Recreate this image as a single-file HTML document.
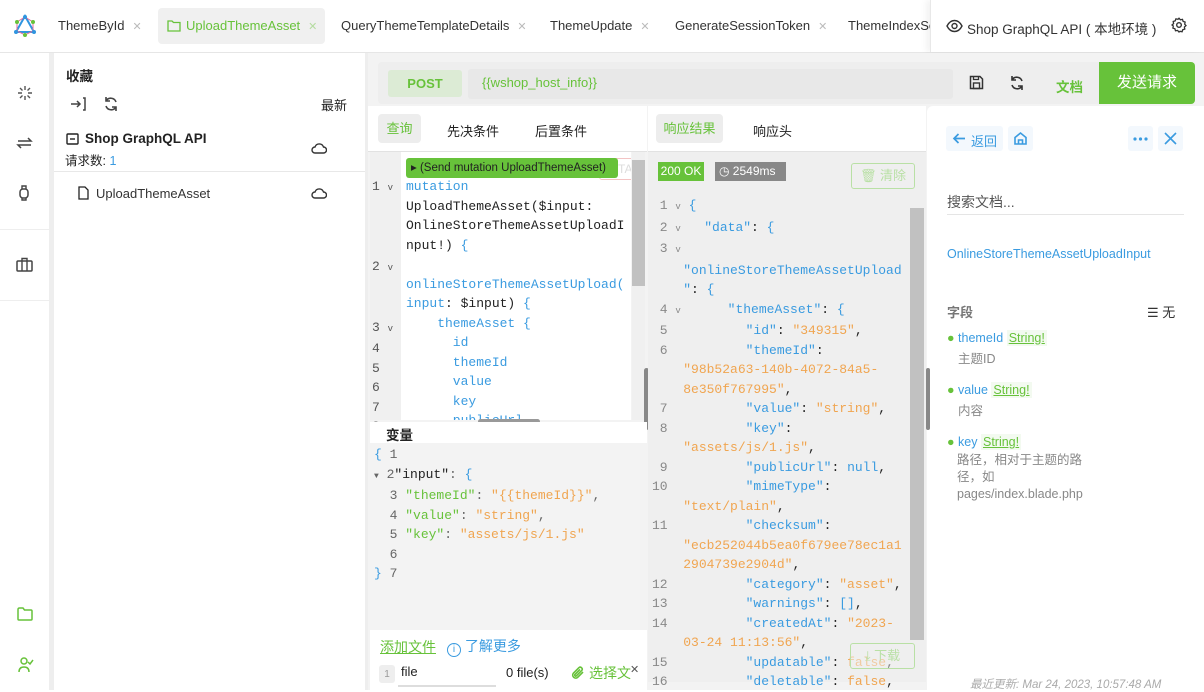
<!DOCTYPE html>
<html><head><meta charset="utf-8"><style>
*{box-sizing:border-box;margin:0;padding:0}
body{width:1204px;height:690px;overflow:hidden;background:#fff;font-family:"Liberation Sans","Noto Sans CJK SC",sans-serif;font-size:13px;color:#222;position:relative}
.a{position:absolute}
.mono{font-family:"Liberation Mono","Noto Sans CJK SC",monospace;font-size:13px;white-space:pre;line-height:19.5px}
.tab{position:absolute;top:8px;height:36px;line-height:36px;font-size:13px;color:#333}
.x{color:#bbb;font-size:11px;margin-left:8px}
.b{color:#3a9be0}.o{color:#f0a550}.g{color:#67c23a}.n{color:#888}
</style></head><body>
<!-- top bar -->
<div class="a" style="left:0;top:52px;width:1204px;height:1px;background:#e6e6e6"></div>
<svg class="a" style="left:13px;top:14px" width="24" height="24" viewBox="0 0 24 24"><polygon points="12,2 21,18 3,18" fill="none" stroke="#2f95e0" stroke-width="2"/><polygon points="12,3 20,8 20,17 12,21 4,17 4,8" fill="none" stroke="#e46d9b" stroke-width="1"/><circle cx="12" cy="3" r="2" fill="#2f95e0"/><circle cx="4" cy="8" r="2" fill="#67c23a"/><circle cx="20" cy="8" r="2" fill="#67c23a"/><circle cx="12" cy="21" r="2" fill="#67c23a"/><circle cx="3" cy="18" r="2" fill="#2f95e0"/><circle cx="21" cy="18" r="2" fill="#2f95e0"/></svg>
<div class="tab" style="left:58px">ThemeById<span class="x">✕</span></div>
<div class="a" style="left:158px;top:8px;width:167px;height:36px;background:#f0f0f0;border-radius:4px"></div>
<svg class="a" style="left:167px;top:19px" width="14" height="13" viewBox="0 0 14 13"><path d="M1 2h4l1.5 1.5H13V12H1z" fill="none" stroke="#67c23a" stroke-width="1.3"/></svg>
<div class="tab" style="left:186px;color:#67c23a">UploadThemeAsset<span class="x" style="color:#b5dca0">✕</span></div>
<div class="tab" style="left:341px">QueryThemeTemplateDetails<span class="x">✕</span></div>
<div class="tab" style="left:550px">ThemeUpdate<span class="x">✕</span></div>
<div class="tab" style="left:675px">GenerateSessionToken<span class="x">✕</span></div>
<div class="tab" style="left:848px">ThemeIndexSe</div>
<div class="a" style="left:930px;top:0;width:274px;height:52px;background:#fff;border-left:1px solid #e8e8e8;box-shadow:-4px 0 6px rgba(0,0,0,.05)"></div>
<svg class="a" style="left:946px;top:19px" width="17" height="14" viewBox="0 0 17 14"><path d="M1 7C3 3 6 1.5 8.5 1.5S14 3 16 7C14 11 11 12.5 8.5 12.5S3 11 1 7z" fill="none" stroke="#333" stroke-width="1.4"/><circle cx="8.5" cy="7" r="2.5" fill="none" stroke="#333" stroke-width="1.4"/></svg>
<div class="a" style="left:967px;top:18px;font-size:13.5px;color:#333">Shop GraphQL API ( 本地环境 )</div>
<svg class="a" style="left:1171px;top:17px" width="16" height="16" viewBox="0 0 16 16"><circle cx="8" cy="8" r="2.3" fill="none" stroke="#333" stroke-width="1.4"/><path d="M8 1.2l1.4 1.6 2.1-.4.6 2 2 .7-.4 2.1L15 8.6l-1.6 1.4.4 2.1-2 .6-.7 2-2.1-.4L8 15l-1.4-1.6-2.1.4-.6-2-2-.7.4-2.1L1 8l1.6-1.4-.4-2.1 2-.6.7-2 2.1.4z" fill="none" stroke="#333" stroke-width="1.3"/></svg>

<!-- left rail -->
<div class="a" style="left:49px;top:53px;width:5px;height:637px;background:#eee"></div>
<div class="a" style="left:0;top:229px;width:49px;height:1px;background:#eee"></div>
<div class="a" style="left:0;top:300px;width:49px;height:1px;background:#eee"></div>
<svg class="a" style="left:17px;top:85px" width="16" height="16" viewBox="0 0 16 16" stroke="#555" stroke-width="1.4"><path d="M8 1v4M8 11v4M1 8h4M11 8h4M3 3l2.5 2.5M10.5 10.5L13 13M13 3l-2.5 2.5M5.5 10.5L3 13"/></svg>
<svg class="a" style="left:16px;top:135px" width="17" height="16" viewBox="0 0 17 16" fill="none" stroke="#444" stroke-width="1.5"><path d="M2 6h13l-3-3M15 10H2l3 3"/></svg>
<svg class="a" style="left:18px;top:184px" width="12" height="18" viewBox="0 0 12 18"><rect x="2" y="5" width="8" height="9" rx="3" fill="none" stroke="#444" stroke-width="1.5"/><path d="M4 5V2h4v3M4 14v2h4v-2" stroke="#444" fill="none" stroke-width="1.4"/></svg>
<svg class="a" style="left:16px;top:257px" width="17" height="15" viewBox="0 0 17 15"><rect x="1" y="4" width="15" height="10" rx="1" fill="none" stroke="#444" stroke-width="1.5"/><path d="M6 4V1.5h5V4M6 4v10M11 4v10" stroke="#444" fill="none" stroke-width="1.4"/></svg>
<svg class="a" style="left:17px;top:607px" width="16" height="14" viewBox="0 0 16 14"><path d="M1 2.5Q1 1 2.5 1h3.5l1.5 2H14q1 0 1 1V12q0 1-1 1H2q-1 0-1-1z" fill="none" stroke="#67c23a" stroke-width="1.5"/></svg>
<svg class="a" style="left:17px;top:656px" width="17" height="17" viewBox="0 0 17 17"><circle cx="7" cy="5" r="3" fill="none" stroke="#67c23a" stroke-width="1.5"/><path d="M2 16q0-5 5-5t5 5M11 6l2 2 3-4" fill="none" stroke="#67c23a" stroke-width="1.5"/></svg>

<!-- sidebar -->
<div class="a" style="left:66px;top:65px;font-weight:bold;font-size:13.5px">收藏</div>
<svg class="a" style="left:70px;top:97px" width="16" height="14" viewBox="0 0 16 14" fill="none" stroke="#444" stroke-width="1.5"><path d="M1 7h9M7 4l3 3-3 3M13 1h2v12h-2"/></svg>
<svg class="a" style="left:103px;top:96px" width="16" height="16" viewBox="0 0 16 16" fill="none" stroke="#444" stroke-width="1.6"><path d="M13 6A5.5 5.5 0 0 0 3 5M3 10a5.5 5.5 0 0 0 10 1M3 1v4h4M13 15v-4H9"/></svg>
<div class="a" style="left:321px;top:95px;font-size:13px">最新</div>
<svg class="a" style="left:66px;top:133px" width="13" height="12" viewBox="0 0 13 12"><rect x="1" y="1" width="11" height="10" rx="1" fill="none" stroke="#222" stroke-width="1.4"/><path d="M4 6h5" stroke="#222" stroke-width="1.4"/></svg>
<div class="a" style="left:85px;top:131px;font-weight:bold;font-size:13.5px">Shop GraphQL API</div>
<div class="a" style="left:65px;top:150px;font-size:12.5px">请求数: <span class="b">1</span></div>
<svg class="a" style="left:311px;top:142px" width="16" height="12" viewBox="0 0 16 12" fill="none" stroke="#333" stroke-width="1.4"><path d="M4 11h8.5a3 3 0 0 0 0-6 4.5 4.5 0 0 0-8.5 0A3 3 0 0 0 4 11z"/></svg>
<div class="a" style="left:54px;top:171px;width:311px;height:1px;background:#e8e8e8"></div>
<svg class="a" style="left:78px;top:186px" width="11" height="14" viewBox="0 0 11 14"><path d="M1 1h6l3 3v9H1z" fill="none" stroke="#222" stroke-width="1.3"/></svg>
<div class="a" style="left:96px;top:186px;font-size:13px;color:#333">UploadThemeAsset</div>
<svg class="a" style="left:311px;top:187px" width="16" height="12" viewBox="0 0 16 12" fill="none" stroke="#333" stroke-width="1.4"><path d="M4 11h8.5a3 3 0 0 0 0-6 4.5 4.5 0 0 0-8.5 0A3 3 0 0 0 4 11z"/></svg>
<div class="a" style="left:365px;top:53px;width:3px;height:637px;background:#eee"></div>

<!-- main -->
<div class="a" style="left:368px;top:53px;width:558px;height:637px;background:#f3f3f3"></div>
<div class="a" style="left:926px;top:53px;width:278px;height:637px;background:#f3f3f3"></div>
<div class="a" style="left:378px;top:62px;width:817px;height:42px;background:#eee;border-radius:4px"></div>
<div class="a" style="left:388px;top:70px;width:74px;height:27px;background:#dcebd5;border-radius:3px;text-align:center;line-height:28px;color:#67c23a;font-weight:bold;font-size:13px">POST</div>
<div class="a" style="left:468px;top:69px;width:485px;height:30px;background:#e8e8e8;border-radius:3px"></div>
<div class="a" style="left:482px;top:75px;color:#67c23a;font-size:13px">{{wshop_host_info}}</div>
<svg class="a" style="left:969px;top:75px" width="15" height="15" viewBox="0 0 15 15"><path d="M1.5 1.5h9.5l2.5 2.5v9.5h-12z" fill="none" stroke="#333" stroke-width="1.5"/><rect x="4.5" y="8" width="6" height="5.5" fill="none" stroke="#333" stroke-width="1.4"/><path d="M4.5 1.5v3h5v-3" fill="none" stroke="#333" stroke-width="1.3"/></svg>
<svg class="a" style="left:1009px;top:75px" width="16" height="16" viewBox="0 0 16 16" fill="none" stroke="#333" stroke-width="1.6"><path d="M13 6A5.5 5.5 0 0 0 3 5M3 10a5.5 5.5 0 0 0 10 1M3 1v4h4M13 15v-4H9"/></svg>
<div class="a" style="left:1056px;top:76px;color:#67c23a;font-weight:bold;font-size:13.5px">文档</div>
<div class="a" style="left:1099px;top:62px;width:96px;height:42px;background:#67c23a;border-radius:0 4px 4px 0;color:#fff;font-size:15px;text-align:center;line-height:42px">发送请求</div>

<!-- query panel -->
<div class="a" style="left:368px;top:106px;width:279px;height:46px;background:#fff"></div>
<div class="a" style="left:378px;top:114px;width:43px;height:29px;background:#ededed;border-radius:4px;color:#67c23a;text-align:center;line-height:29px">查询</div>
<div class="a" style="left:447px;top:121px">先决条件</div>
<div class="a" style="left:535px;top:121px">后置条件</div>
<div class="a" style="left:368px;top:151px;width:279px;height:1px;background:#e2e2e2"></div>
<div class="a" style="left:370px;top:152px;width:31px;height:268px;background:#f0f0f0"></div>
<div class="a" style="left:401px;top:152px;width:230px;height:268px;background:#fff;overflow:hidden">
 <div class="a" style="left:198px;top:6px;width:42px;height:22px;border:1px solid #f3c4c4;border-radius:3px;color:#ddd;font-size:12px;line-height:20px;padding-left:10px">ETA</div>
 <div class="a" style="left:5px;top:6px;width:212px;height:20px;background:#67c23a;border-radius:3px;color:#222;font-size:11.5px;line-height:20px;padding-left:5px;white-space:nowrap;overflow:hidden">▸ (Send mutation UploadThemeAsset)</div>
 <div class="a mono" style="left:5px;top:25px"><span class="b">mutation</span>
UploadThemeAsset(<span style="color:#222">$input</span>:
OnlineStoreThemeAssetUploadI
nput!) <span class="b">{</span>

<span class="b">onlineStoreThemeAssetUpload(</span>
<span class="b">input</span>: $input) <span class="b">{</span>
<span class="b">    themeAsset {</span>
<span class="b">      id</span>
<span class="b">      themeId</span>
<span class="b">      value</span>
<span class="b">      key</span>
<span class="b">      publicUrl</span></div>
</div>
<div class="a mono" style="left:372px;top:177px;width:30px;color:#555;font-size:13px">1 <span style="font-size:9px">v</span>



2 <span style="font-size:9px">v</span>


3 <span style="font-size:9px">v</span>
4
5
6
7
8</div>
<div class="a" style="left:632px;top:152px;width:13px;height:268px;background:#f0f0f0"></div>
<div class="a" style="left:632px;top:160px;width:13px;height:126px;background:#c1c1c1"></div>
<div class="a" style="left:478px;top:419px;width:62px;height:5px;background:#999;border-radius:3px"></div>
<div class="a" style="left:644px;top:368px;width:5px;height:62px;background:#888;border-radius:3px"></div>
<div class="a" style="left:370px;top:422px;width:277px;height:21px;background:#fff"></div>
<div class="a" style="left:386px;top:424px;font-weight:bold;font-size:13.5px">变量</div>
<div class="a mono" style="left:374px;top:445px;font-size:13px;color:#666"><span class="b">{</span> 1
<span style="font-size:8px">▼</span> 2<span style="color:#222">"input"</span>: <span class="b">{</span>
  3 <span class="g">"themeId"</span>: <span class="o">"{{themeId}}"</span>,
  4 <span class="g">"value"</span>: <span class="o">"string"</span>,
  5 <span class="g">"key"</span>: <span class="o">"assets/js/1.js"</span>
  6
<span class="b">}</span> 7</div>
<div class="a" style="left:370px;top:630px;width:277px;height:60px;background:#fff"></div>
<div class="a" style="left:380px;top:637px;color:#67c23a;text-decoration:underline;font-size:14px">添加文件</div>
<div class="a" style="left:447px;top:636px;color:#3a9be0;font-size:14px"><span style="display:inline-block;width:14px;height:14px;border:1.5px solid #3a9be0;border-radius:50%;font-size:10px;text-align:center;line-height:11px;vertical-align:-1px">i</span> 了解更多</div>
<div class="a" style="left:379px;top:665px;width:16px;height:18px;background:#eee;border-radius:3px;font-size:10px;color:#999;text-align:center;line-height:20px">1</div>
<div class="a" style="left:401px;top:664px;font-size:13px">file</div>
<div class="a" style="left:398px;top:685px;width:98px;height:2px;background:#ddd"></div>
<div class="a" style="left:506px;top:665px;font-size:13px">0 file(s)</div>
<svg class="a" style="left:571px;top:666px" width="14" height="14" viewBox="0 0 14 14" fill="none" stroke="#67c23a" stroke-width="1.6"><path d="M12 6L6.5 11.5a3 3 0 0 1-4.2-4.2L8 1.6a2 2 0 0 1 2.8 2.8L5.3 9.9a1 1 0 0 1-1.4-1.4L9 3.4"/></svg>
<div class="a" style="left:589px;top:663px;color:#67c23a;font-size:14px">选择文</div>
<div class="a" style="left:630px;top:663px;font-size:11px;color:#555">✕</div>

<!-- response panel -->
<div class="a" style="left:648px;top:106px;width:278px;height:46px;background:#fff"></div>
<div class="a" style="left:656px;top:114px;width:67px;height:29px;background:#ededed;border-radius:4px;color:#67c23a;text-align:center;line-height:29px">响应结果</div>
<div class="a" style="left:753px;top:121px">响应头</div>
<div class="a" style="left:648px;top:151px;width:278px;height:1px;background:#e2e2e2"></div>
<div class="a" style="left:648px;top:152px;width:278px;height:530px;background:#efefef"></div>
<div class="a" style="left:658px;top:162px;width:46px;height:19px;background:#67c23a;color:#fff;font-size:12px;text-align:center;line-height:19px">200 OK</div>
<div class="a" style="left:715px;top:162px;width:71px;height:19px;background:#888;color:#fff;font-size:12px;line-height:19px;padding-left:4px">◷ 2549ms</div>
<div class="a" style="left:851px;top:163px;width:64px;height:26px;border:1px solid #b9e0a5;border-radius:3px;color:#b9e0a5;font-size:13px;text-align:center;line-height:24px">🗑 清除</div>
<div class="a" style="left:910px;top:208px;width:14px;height:432px;background:#c1c1c1"></div>
<div class="a mono" style="left:652px;top:196px;font-size:13px;line-height:19.5px"><span class="n"> 1</span> <span class="n" style="font-size:9px">v</span> <span class="b">{</span>
<span class="n"> 2</span> <span class="n" style="font-size:9px">v</span>   <span class="b">"data"</span>: <span class="b">{</span>
<span class="n"> 3</span> <span class="n" style="font-size:9px">v</span>
    <span class="b">"onlineStoreThemeAssetUpload</span>
    <span class="b">"</span>: <span class="b">{</span>
<span class="n"> 4</span> <span class="n" style="font-size:9px">v</span>      <span class="b">"themeAsset"</span>: <span class="b">{</span>
<span class="n"> 5</span>          <span class="b">"id"</span>: <span class="o">"349315"</span>,
<span class="n"> 6</span>          <span class="b">"themeId"</span>:
    <span class="o">"98b52a63-140b-4072-84a5-</span>
    <span class="o">8e350f767995"</span>,
<span class="n"> 7</span>          <span class="b">"value"</span>: <span class="o">"string"</span>,
<span class="n"> 8</span>          <span class="b">"key"</span>:
    <span class="o">"assets/js/1.js"</span>,
<span class="n"> 9</span>          <span class="b">"publicUrl"</span>: <span class="b">null</span>,
<span class="n">10</span>          <span class="b">"mimeType"</span>:
    <span class="o">"text/plain"</span>,
<span class="n">11</span>          <span class="b">"checksum"</span>:
    <span class="o">"ecb252044b5ea0f679ee78ec1a1</span>
    <span class="o">2904739e2904d"</span>,
<span class="n">12</span>          <span class="b">"category"</span>: <span class="o">"asset"</span>,
<span class="n">13</span>          <span class="b">"warnings"</span>: <span class="b">[]</span>,
<span class="n">14</span>          <span class="b">"createdAt"</span>: <span class="o">"2023-</span>
    <span class="o">03-24 11:13:56"</span>,
<span class="n">15</span>          <span class="b">"updatable"</span>: <span class="o">false</span>,
<span class="n">16</span>          <span class="b">"deletable"</span>: <span class="o">false</span>,</div>
<div class="a" style="left:850px;top:643px;width:65px;height:26px;border:1px solid #b9e0a5;border-radius:3px;color:#b9e0a5;font-size:13px;text-align:center;line-height:24px;background:rgba(239,239,239,.5)">⤓ 下载</div>

<!-- docs pane -->
<div class="a" style="left:927px;top:106px;width:277px;height:584px;background:#fff;border-radius:6px 0 0 0"></div>
<div class="a" style="left:926px;top:368px;width:4px;height:62px;background:#888;border-radius:2px"></div>
<div class="a" style="left:946px;top:126px;width:57px;height:25px;background:#f3f8fd;border-radius:3px"></div>
<svg class="a" style="left:952px;top:132px" width="14" height="13" viewBox="0 0 14 13" fill="none" stroke="#3a9be0" stroke-width="1.7"><path d="M13 6.5H2M6.5 2L2 6.5 6.5 11"/></svg>
<div class="a" style="left:971px;top:131px;color:#3a9be0;font-size:13px;white-space:nowrap">返回</div>
<div class="a" style="left:1008px;top:126px;width:25px;height:25px;background:#f3f8fd;border-radius:3px"></div>
<svg class="a" style="left:1013px;top:131px" width="15" height="15" viewBox="0 0 15 15"><path d="M2 6.5L7.5 2 13 6.5V13H2z M5.5 13V9h4v4" fill="none" stroke="#3a9be0" stroke-width="1.6"/></svg>
<div class="a" style="left:1128px;top:126px;width:25px;height:25px;background:#f3f8fd;border-radius:3px"></div>
<svg class="a" style="left:1133px;top:137px" width="15" height="4" viewBox="0 0 15 4" fill="#3a9be0"><circle cx="2" cy="2" r="1.6"/><circle cx="7.5" cy="2" r="1.6"/><circle cx="13" cy="2" r="1.6"/></svg>
<div class="a" style="left:1158px;top:126px;width:25px;height:25px;background:#f3f8fd;border-radius:3px"></div>
<svg class="a" style="left:1164px;top:132px" width="13" height="13" viewBox="0 0 13 13" stroke="#3a9be0" stroke-width="1.6"><path d="M1 1l11 11M12 1L1 12"/></svg>
<div class="a" style="left:947px;top:192px;color:#555;font-size:14px">搜索文档...</div>
<div class="a" style="left:947px;top:214px;width:237px;height:1px;background:#e5e5e5"></div>
<div class="a" style="left:947px;top:247px;color:#3a9be0;font-size:12.5px">OnlineStoreThemeAssetUploadInput</div>
<div class="a" style="left:947px;top:302px;color:#777;font-size:13px;font-weight:bold">字段</div>
<div class="a" style="left:1147px;top:302px;color:#333;font-size:13px">☰ 无</div>
<div class="a" style="left:947px;top:331px;font-size:12.5px"><span class="g">●</span> <span class="b">themeId</span> <span style="background:#f3faf0;color:#67c23a;text-decoration:underline;padding:1px 2px">String!</span></div>
<div class="a" style="left:958px;top:348px;color:#888;font-size:12.5px">主题ID</div>
<div class="a" style="left:947px;top:383px;font-size:12.5px"><span class="g">●</span> <span class="b">value</span> <span style="background:#f3faf0;color:#67c23a;text-decoration:underline;padding:1px 2px">String!</span></div>
<div class="a" style="left:958px;top:400px;color:#888;font-size:12.5px">内容</div>
<div class="a" style="left:947px;top:435px;font-size:12.5px"><span class="g">●</span> <span class="b">key</span> <span style="background:#f3faf0;color:#67c23a;text-decoration:underline;padding:1px 2px">String!</span></div>
<div class="a" style="left:957px;top:452px;color:#888;font-size:12.5px;line-height:17px;white-space:nowrap">路径，相对于主题的路<br>径，如<br>pages/index.blade.php</div>
<div class="a" style="left:970px;top:676px;color:#aaa;font-size:11.5px;font-style:italic">最近更新: Mar 24, 2023, 10:57:48 AM</div>
</body></html>
